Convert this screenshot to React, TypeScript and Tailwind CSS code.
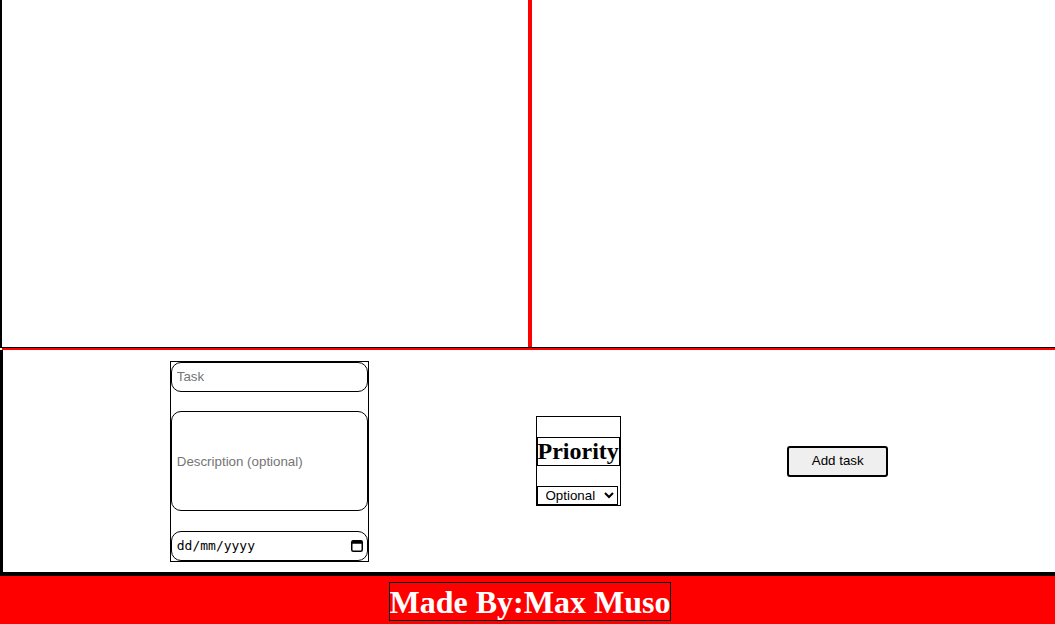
import React, { useState } from 'react';

const CalendarIcon = () => (
    <svg width="12" height="13" viewBox="0 0 12 13" fill="none">
        <rect x="0.75" y="1.75" width="10.5" height="10.5" rx="1.5" stroke="#000" strokeWidth="1.5" />
        <rect x="0.75" y="1.75" width="10.5" height="3" fill="#000" />
    </svg>
);

const App = () => {
    const [task, setTask] = useState('');
    const [description, setDescription] = useState('');
    const [priority, setPriority] = useState('Optional');

    const handleAdd = () => {
        console.log('Task added:', { task, description, priority });
    };

    return (
        <div className="w-full h-[624px] overflow-hidden bg-white flex flex-col">
            {/* task lists */}
            <div className="flex h-[347px]">
                <div className="w-[530px] border-l-2 border-black border-r-2 border-r-[#ff0000]" />
                <div className="flex-1 border-l-2 border-[#ff0000]" />
            </div>
            <div className="h-px bg-black" />
            <div className="h-[2px] bg-[#ff0000] ml-[2px]" />

            {/* form */}
            <div className="h-[226px] border-l-[3px] border-b-4 border-black flex items-center justify-evenly">
                <div className="w-[199px] h-[201px] border border-black flex flex-col justify-between font-['Liberation_Sans',sans-serif] text-[13.33px]">
                    <input
                        type="text"
                        value={task}
                        onChange={(e) => setTask(e.target.value)}
                        placeholder="Task"
                        className="h-[30px] w-full border border-black rounded-[10px] px-[5px] placeholder:text-[#757575] outline-none"
                    />
                    <input
                        type="text"
                        value={description}
                        onChange={(e) => setDescription(e.target.value)}
                        placeholder="Description (optional)"
                        className="h-[100px] w-full border border-black rounded-[10px] px-[5px] placeholder:text-[#757575] outline-none"
                    />
                    <div className="h-[30px] w-full border border-black rounded-[10px] pl-[5px] pr-[4px] flex items-center justify-between">
                        <span className="font-['DejaVu_Sans_Mono',monospace] text-[13px] text-black">dd/mm/yyyy</span>
                        <CalendarIcon />
                    </div>
                </div>

                <div className="w-[85px] h-[90px] border border-black flex flex-col">
                    <h2 className="mt-[20px] h-[29px] border border-black font-['Liberation_Serif',serif] font-bold text-[24px] leading-[27px] text-center whitespace-nowrap">
                        Priority
                    </h2>
                    <select
                        value={priority}
                        onChange={(e) => setPriority(e.target.value)}
                        className="mt-[20px] w-[81px] h-[20px] border border-black font-['Liberation_Sans',sans-serif] text-[13.33px] pl-[4px] outline-none"
                    >
                        <option>Optional</option>
                        <option>Low</option>
                        <option>Medium</option>
                        <option>High</option>
                    </select>
                </div>

                <button
                    onClick={handleAdd}
                    className="w-[101px] h-[31px] border-2 border-black rounded-[3px] bg-[#efefef] font-['Liberation_Sans',sans-serif] text-[13.33px]"
                >
                    Add task
                </button>
            </div>

            {/* footer */}
            <div className="flex-1 bg-[#ff0000] flex justify-center pt-[6px] pl-[5px]">
                <h1 className="h-[39px] border border-black font-['Liberation_Serif',serif] font-bold text-[32px] leading-[38px] text-white whitespace-nowrap">
                    Made By:Max Muso
                </h1>
            </div>
        </div>
    );
};

export default App;
